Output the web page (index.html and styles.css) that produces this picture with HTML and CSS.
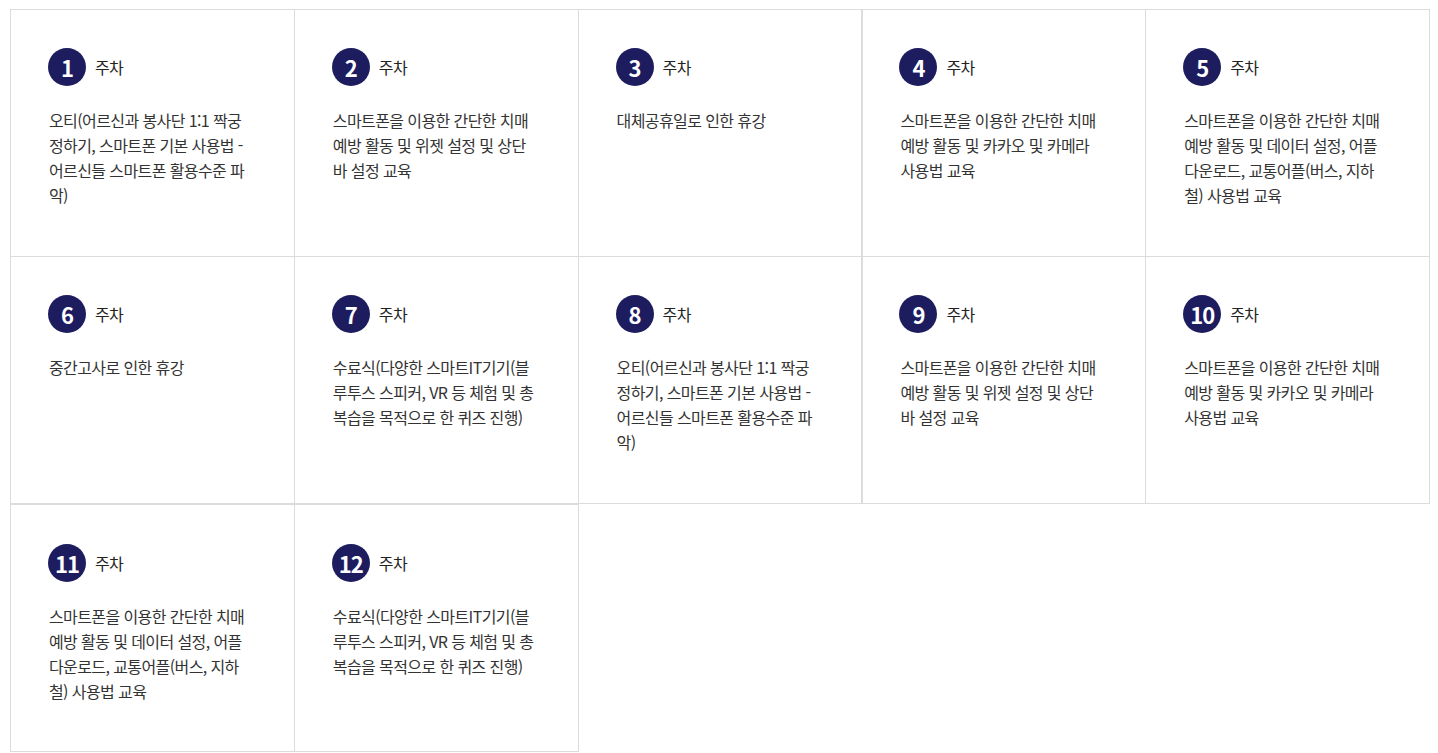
FILE: index.html
```html
<!DOCTYPE html>
<html lang="ko">
<head>
<meta charset="utf-8">
<title>주차별 교육</title>
<link rel="stylesheet" href="styles.css">
</head>
<body>
<ul class="weeks">
  <li class="week"><div class="week-head"><span class="num">1</span><span class="label">주차</span></div><p class="desc">오티(어르신과 봉사단 1:1 짝궁 정하기, 스마트폰 기본 사용법 - 어르신들 스마트폰 활용수준 파악)</p></li>
  <li class="week"><div class="week-head"><span class="num">2</span><span class="label">주차</span></div><p class="desc">스마트폰을 이용한 간단한 치매 예방 활동 및 위젯 설정 및 상단바 설정 교육</p></li>
  <li class="week"><div class="week-head"><span class="num">3</span><span class="label">주차</span></div><p class="desc">대체공휴일로 인한 휴강</p></li>
  <li class="week"><div class="week-head"><span class="num">4</span><span class="label">주차</span></div><p class="desc">스마트폰을 이용한 간단한 치매 예방 활동 및 카카오 및 카메라 사용법 교육</p></li>
  <li class="week"><div class="week-head"><span class="num">5</span><span class="label">주차</span></div><p class="desc">스마트폰을 이용한 간단한 치매 예방 활동 및 데이터 설정, 어플 다운로드, 교통어플(버스, 지하철) 사용법 교육</p></li>
  <li class="week"><div class="week-head"><span class="num">6</span><span class="label">주차</span></div><p class="desc">중간고사로 인한 휴강</p></li>
  <li class="week"><div class="week-head"><span class="num">7</span><span class="label">주차</span></div><p class="desc">수료식(다양한 스마트IT기기(블루투스 스피커, VR 등 체험 및 총복습을 목적으로 한 퀴즈 진행)</p></li>
  <li class="week"><div class="week-head"><span class="num">8</span><span class="label">주차</span></div><p class="desc">오티(어르신과 봉사단 1:1 짝궁 정하기, 스마트폰 기본 사용법 - 어르신들 스마트폰 활용수준 파악)</p></li>
  <li class="week"><div class="week-head"><span class="num">9</span><span class="label">주차</span></div><p class="desc">스마트폰을 이용한 간단한 치매 예방 활동 및 위젯 설정 및 상단바 설정 교육</p></li>
  <li class="week"><div class="week-head"><span class="num">10</span><span class="label">주차</span></div><p class="desc">스마트폰을 이용한 간단한 치매 예방 활동 및 카카오 및 카메라 사용법 교육</p></li>
  <li class="week"><div class="week-head"><span class="num">11</span><span class="label">주차</span></div><p class="desc">스마트폰을 이용한 간단한 치매 예방 활동 및 데이터 설정, 어플 다운로드, 교통어플(버스, 지하철) 사용법 교육</p></li>
  <li class="week"><div class="week-head"><span class="num">12</span><span class="label">주차</span></div><p class="desc">수료식(다양한 스마트IT기기(블루투스 스피커, VR 등 체험 및 총복습을 목적으로 한 퀴즈 진행)</p></li>
</ul>
</body>
</html>
```
FILE: styles.css
```css
html, body {
  margin: 0;
  padding: 0;
  background: #fff;
}
body {
  font-family: "Noto Sans CJK KR", "Noto Sans", sans-serif;
  color: #333;
}
.weeks {
  list-style: none;
  margin: 9px 0 0 10px;
  padding: 0;
  width: 1420px;
  display: grid;
  grid-template-columns: repeat(5, 1fr);
  grid-template-rows: 247px 247px 248px;
  border-top: 1px solid #dcdcdc;
  border-left: 1px solid #dcdcdc;
  box-sizing: border-box;
}
.week {
  box-sizing: border-box;
  border-right: 1px solid #dcdcdc;
  border-bottom: 1px solid #dcdcdc;
  padding: 38px 42px 0 37px;
}
.week:nth-child(5n+4) {
  border-left: 1px solid #dcdcdc;
  padding-left: 36px;
}
.week:nth-child(n+11) {
  border-top: 1px solid #dcdcdc;
  padding-top: 39px;
}
.week-head {
  display: flex;
  align-items: center;
  gap: 9px;
  height: 38px;
}
.num {
  width: 38px;
  height: 38px;
  border-radius: 50%;
  background: #1d1c5f;
  color: #fff;
  font-weight: 700;
  font-size: 22px;
  letter-spacing: -1px;
  display: flex;
  align-items: center;
  justify-content: center;
  flex: none;
}
.label {
  font-size: 16px;
  letter-spacing: -0.6px;
  color: #222;
}
.desc {
  margin: 22px 0 0 1px;
  font-size: 16px;
  letter-spacing: -0.6px;
  line-height: 25px;
  color: #333;
}
```
